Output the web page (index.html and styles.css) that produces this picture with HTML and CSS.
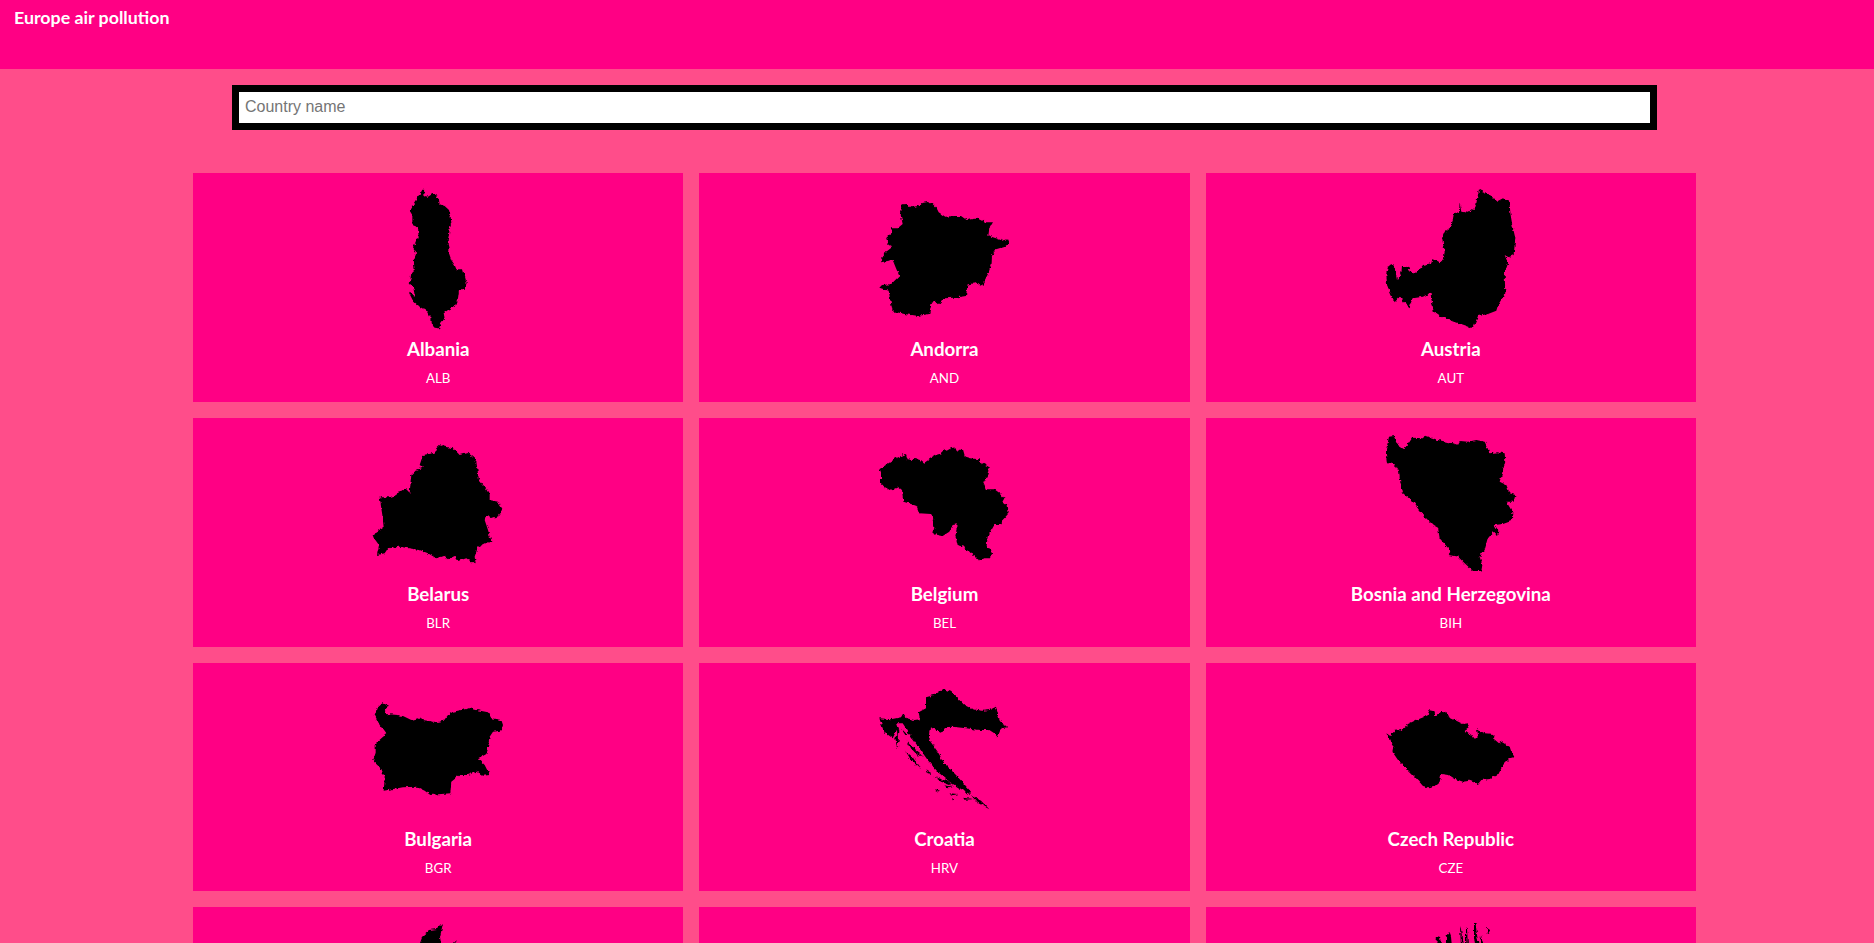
FILE: index.html
```html
<!DOCTYPE html>
<html lang="en">
<head>
<meta charset="utf-8">
<title>Europe air pollution</title>
<link rel="stylesheet" href="styles.css">
</head>
<body>
<header class="topbar"><h1 class="brand">Europe air pollution</h1></header>
<main class="content">
  <div class="search"><input class="search-input" type="text" placeholder="Country name"></div>
  <section class="grid">
    <article class="card">
      <svg class="map" viewBox="550 57 390 420"><path d="M697 58L703 60 705 78 715 80 728 72 740 75 748 90 750 103 765 108 778 120 783 140 785 158 780 175 778 195 774 210 780 235 778 250 785 270 795 285 800 298 820 298 826 320 831 340 825 355 808 362 805 385 795 410 775 420 762 430 765 445 755 458 748 475 735 473 727 465 725 445 715 425 690 410 670 392 658 368 668 372 675 378 672 355 660 340 665 310 675 302 672 270 680 250 670 235 680 210 687 205 685 172 668 165 668 135 660 122 675 95 685 80Z"/></svg>
      <h2 class="name">Albania</h2><p class="code">ALB</p>
    </article>
    <article class="card">
      <svg class="map" viewBox="119 57 390 420"><path d="M190 103L205 102 215 112 235 108 245 100 265 96 280 102 292 115 298 127 318 140 345 138 365 138 382 150 405 146 420 147 440 157 461 157 450 175 447 197 470 205 490 212 505 208 510 220 495 230 470 238 458 255 457 280 447 310 428 347 410 340 385 343 380 378 345 383 315 385 298 405 288 395 277 398 270 432 235 438 195 432 160 424 152 385 148 362 120 353 128 345 155 343 180 318 170 295 160 270 125 277 135 250 158 232 145 222 140 205 155 190 158 175 175 175 190 162 182 125Z"/></svg>
      <h2 class="name">Andorra</h2><p class="code">AND</p>
    </article>
    <article class="card">
      <svg class="map" viewBox="79 57 390 420"><path d="M358 58L365 62 380 68 395 78 410 95 430 85 450 98 452 130 458 165 467 205 462 255 447 262 435 255 445 280 435 310 437 370 415 405 410 422 385 432 355 438 340 475 320 467 285 455 240 438 222 425 215 385 212 368 190 380 160 385 150 412 130 395 120 380 105 397 95 375 82 345 80 310 85 290 95 282 105 295 112 330 125 310 127 287 145 292 155 312 175 305 190 285 215 280 218 267 240 280 250 268 260 275 260 303 250 290 255 245 247 205 255 185 275 170 283 130 298 125 300 100 305 125 325 128 335 118 345 120 350 100Z"/></svg>
      <h2 class="name">Austria</h2><p class="code">AUT</p>
    </article>
    <article class="card">
      <svg class="map" viewBox="40 12 390 420"><path d="M243 43L255 50 280 55 295 70 300 75 325 68 345 85 350 95 355 130 358 150 375 170 390 195 390 210 415 215 430 240 415 258 395 265 380 258 375 270 385 300 395 335 375 340 355 350 345 380 348 400 335 395 320 385 295 393 285 378 265 388 250 378 230 385 205 370 180 360 120 350 85 355 75 370 52 375 58 345 40 320 50 305 72 292 68 255 60 202 90 202 110 195 115 185 140 178 150 188 152 165 155 135 170 120 190 112 180 105 190 75 225 68 230 55Z"/></svg>
      <h2 class="name">Belarus</h2><p class="code">BLR</p>
    </article>
    <article class="card">
      <svg class="map" viewBox="29 12 390 420"><path d="M110 72L115 88 130 90 135 84 155 90 165 98 185 85 200 75 217 70 222 56 232 62 245 55 258 52 265 65 280 55 287 80 302 85 328 88 332 97 358 110 355 135 342 160 350 178 375 178 395 192 405 205 398 218 415 225 418 250 400 270 395 285 375 285 355 320 352 345 368 370 365 385 345 385 330 393 315 375 300 368 285 350 265 345 258 315 265 283 250 285 240 305 220 318 192 312 195 290 190 270 195 265 185 252 150 250 142 228 125 222 102 215 98 180 88 172 65 182 45 170 35 160 35 130 30 118 60 98 80 85Z"/></svg>
      <h2 class="name">Belgium</h2><p class="code">BEL</p>
    </article>
    <article class="card">
      <svg class="map" viewBox="49 27 390 420"><path d="M58 35L72 33 78 45 85 60 102 72 115 58 128 38 160 40 165 32 185 38 205 45 230 50 250 55 265 60 272 48 295 50 320 45 345 50 352 65 360 85 385 82 405 85 407 110 400 135 390 170 410 180 420 205 437 210 432 230 410 230 428 260 427 287 400 297 375 300 385 315 387 333 370 322 355 340 345 375 330 395 338 420 335 438 310 438 285 415 265 395 237 390 245 380 232 365 210 340 205 308 190 300 165 275 148 255 130 230 100 205 92 170 88 140 75 118 52 115 48 80Z"/></svg>
      <h2 class="name">Bosnia and Herzegovina</h2><p class="code">BIH</p>
    </article>
    <article class="card">
      <svg class="map" viewBox="40 -33 390 420"><path d="M68 40L88 50 75 58 78 72 115 75 130 78 155 90 175 85 190 90 230 97 252 92 265 75 280 65 330 55 350 60 385 67 395 85 425 90 430 105 425 122 400 125 390 140 382 190 355 205 375 225 390 255 370 257 350 245 325 255 300 255 275 275 272 310 245 312 212 315 195 302 170 290 130 292 85 300 72 302 75 262 65 237 40 212 48 188 48 160 80 132 60 105 45 75 52 55Z"/></svg>
      <h2 class="name">Bulgaria</h2><p class="code">BGR</p>
    </article>
    <article class="card">
      <svg class="map" viewBox="29 -3 390 420"><path d="M222 27L245 35 270 60 285 75 310 88 340 92 360 90 380 80 388 110 395 130 418 142 395 145 385 172 375 160 360 150 330 150 290 145 250 140 225 142 215 158 200 152 185 142 180 180 205 215 225 250 260 285 305 335 300 342 280 330 240 305 205 275 175 240 150 205 125 170 110 145 100 130 80 130 85 145 70 175 50 160 40 145 30 115 65 118 95 112 102 100 112 115 135 120 152 118 148 97 170 85 170 52 195 45Z"/><path d="M305 345L335 362 360 388 325 368Z"/><path d="M82 140L90 150 88 180 82 195 78 175 84 165Z"/><path d="M95 145L115 165 108 165Z"/><path d="M112 180L135 205 150 232 125 205Z"/><path d="M108 212L130 232 155 268 125 240Z"/><path d="M130 205L165 232 140 218Z"/><path d="M168 268L190 282 175 280Z"/><path d="M195 290L240 305 250 318 215 305Z"/><path d="M225 316L250 322 235 325Z"/><path d="M198 328L212 332 200 336Z"/><path d="M240 340L265 342 250 346Z"/><path d="M282 353L310 358 285 359Z"/><path d="M248 355L256 358 250 361Z"/><path d="M80 195L90 200 85 206Z"/></svg>
      <h2 class="name">Croatia</h2><p class="code">HRV</p>
    </article>
    <article class="card">
      <svg class="map" viewBox="49 -63 390 420"><path d="M175 30L190 33 195 48 215 35 230 38 235 50 260 62 280 72 296 70 297 82 285 90 305 105 312 118 325 105 322 88 345 100 372 102 370 115 388 130 395 125 420 140 425 155 437 170 420 175 400 195 385 225 360 237 335 240 325 252 300 242 280 245 250 235 235 225 215 222 210 245 195 258 175 262 160 258 135 230 105 200 85 180 68 155 72 135 62 125 50 100 62 108 75 92 95 90 115 72 135 62 165 50 182 42Z"/></svg>
      <h2 class="name">Czech Republic</h2><p class="code">CZE</p>
    </article>
    <article class="card">
      <svg class="map" viewBox="0 0 130 140"><path d="M70 0L64 6 56 7 50 12 47 20 44 34 34 42 30 60 36 76 44 86 58 86 68 74 66 56 70 40 67 26 68 20 67 14Z"/><path d="M81 18L83 19 82 21Z"/><path d="M76 60L100 58 112 74 104 100 84 112 72 92Z"/></svg>
      <h2 class="name">Denmark</h2><p class="code">DNK</p>
    </article>
    <article class="card">
      <svg class="map" viewBox="0 0 130 140"><path d="M8 40L40 30 90 28 118 34 124 46 112 66 116 100 96 108 70 100 50 84 30 78 12 66Z"/></svg>
      <h2 class="name">Estonia</h2><p class="code">EST</p>
    </article>
    <article class="card">
      <svg class="map" viewBox="0 0 130 140"><path d="M88 0L89.5 0 91 12 93 24 90 30 88 14Z"/><path d="M74 3L75 6 77 24 75 24Z"/><path d="M80 4L81 6 82 24 80 24Z"/><path d="M101 5L104 7 103 11 101 10Z"/><path d="M63 8L65 14 66 24 60 24 60 14Z"/><path d="M51 13L54 14 55 22 50 24Z"/><path d="M95 12L96 16 98 24 94 24Z"/><path d="M50 24L68 24 72 60 60 90 52 60Z"/><path d="M74 24L90 30 88 60 78 90Z"/></svg>
      <h2 class="name">Faroe Islands</h2><p class="code">FRO</p>
    </article>
  </section>
</main>
<svg class="defs" width="0" height="0" aria-hidden="true">
  <filter id="rough" x="-5%" y="-5%" width="110%" height="110%" color-interpolation-filters="sRGB">
    <feTurbulence type="fractalNoise" baseFrequency="0.28" numOctaves="2" seed="4" result="n"/>
    <feDisplacementMap in="SourceGraphic" in2="n" scale="4" xChannelSelector="R" yChannelSelector="G"/>
  </filter>
</svg>
</body>
</html>
```
FILE: styles.css
```css
* { box-sizing: border-box; }
html, body { margin: 0; padding: 0; }
body {
  background: #ff4d8a;
  font-family: "Lato", "Liberation Sans", sans-serif;
  color: #fff;
}
.topbar {
  height: 69px;
  background: #ff0084;
  padding: 7px 14px 0;
}
.brand {
  margin: 0;
  font-size: 17.8px;
  line-height: 21px;
  font-weight: 700;
}
.content {
  padding: 16px 178px 16px 193px;
}
.search {
  padding: 0 39px;
  margin-bottom: 43.33px;
}
.search-input {
  display: block;
  width: 100%;
  height: 45px;
  border: 7px solid #000;
  border-radius: 0;
  background: #fff;
  padding: 0 6px 2px;
  font-family: "Liberation Sans", Arial, sans-serif;
  font-size: 16px;
  outline: none;
}
.search-input::placeholder { color: #757575; opacity: 1; }
.grid {
  display: grid;
  grid-template-columns: repeat(3, 1fr);
  column-gap: 16px;
  row-gap: 16px;
}
.card {
  height: 228.67px;
  background: #ff0084;
  padding-top: 16px;
  display: flex;
  flex-direction: column;
  align-items: center;
  text-align: center;
}
.map {
  display: block;
  width: 130px;
  height: 140px;
  flex: none;
  fill: #000;
  filter: url(#rough);
}
.name {
  margin: 9px 0 0;
  font-size: 18.72px;
  line-height: 22px;
  font-weight: 700;
}
.code {
  margin: 8px 0 0;
  font-size: 13.33px;
  line-height: 20px;
  font-weight: 400;
}
.defs { display: block; }
```
